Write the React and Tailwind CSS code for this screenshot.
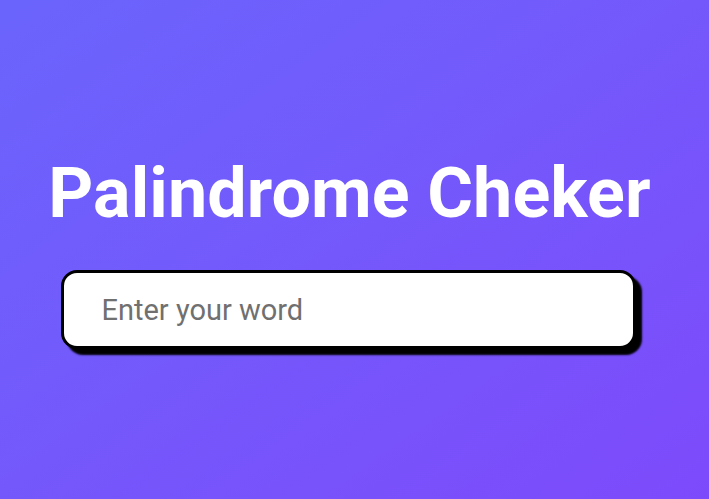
export default function App() {
  return (
    <div
      className="w-[709px] h-[499px] bg-gradient-to-br from-[#6a64fc] to-[#7d4afb] flex flex-col items-center pr-[10px] pt-[153px]"
      style={{ fontFamily: 'Roboto, "Liberation Sans", sans-serif' }}
    >
      <h1 className="text-white font-bold text-[70px] leading-[80px] tracking-[0.1px]">
        Palindrome Cheker
      </h1>
      <div className="mt-[37px] ml-[-3px] w-[575px] h-[79px] bg-white border-[3px] border-black rounded-[16px] shadow-[6px_6px_2px_#000] flex items-center pl-[38px] pt-[2px]">
        <input
          type="text"
          placeholder="Enter your word"
          className="w-full outline-none bg-transparent text-[29px] placeholder:text-[#707070] text-[#333]"
        />
      </div>
    </div>
  );
}
